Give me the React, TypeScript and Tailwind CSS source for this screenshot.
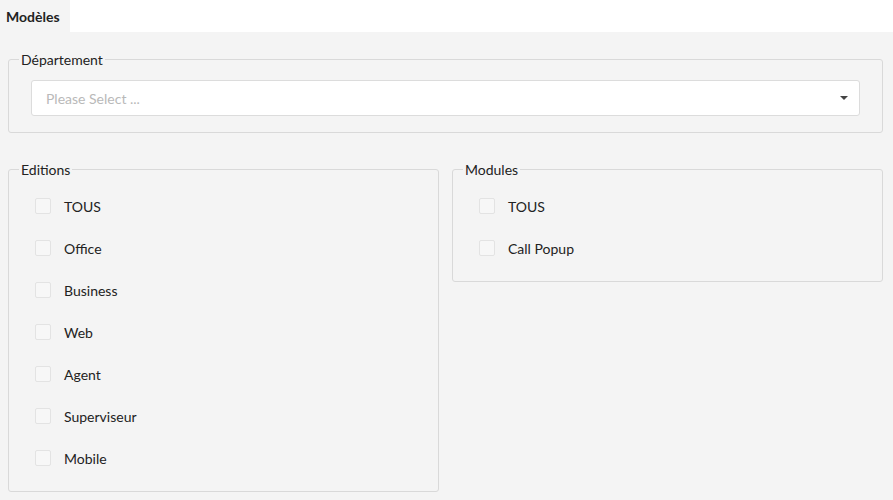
import React from 'react';

const editions = ['TOUS', 'Office', 'Business', 'Web', 'Agent', 'Superviseur', 'Mobile'];
const modules = ['TOUS', 'Call Popup'];

function CheckRow({ label }: { label: string }) {
  return (
    <label className="flex h-[42px] items-center gap-[13px]">
      <span className="size-4 rounded-[2px] border border-[#e3e3e3] bg-[#f7f7f7]" />
      <span className="text-[14px] text-[#222]">{label}</span>
    </label>
  );
}

function Group({ title, items, className }: { title: string; items: string[]; className?: string }) {
  return (
    <fieldset className={`rounded-[3px] border border-[#d9d9d9] px-[26px] pt-[5px] pb-[12px] ${className ?? ''}`}>
      <legend className="-ml-[16px] px-[2px] text-[14px] text-[#222]">{title}</legend>
      {items.map((item) => (
        <CheckRow key={item} label={item} />
      ))}
    </fieldset>
  );
}

export default function App() {
  return (
    <div className="min-h-[500px] bg-[#f4f4f4] font-['Lato',sans-serif]">
      <div className="flex h-8 bg-white">
        <div className="flex w-[70px] items-center bg-[#f4f4f4] pl-[6px] text-[14px] font-bold text-[#222]">
          Modèles
        </div>
      </div>

      <div className="pt-[17px] pr-[10px] pl-[8px]">
        <fieldset className="rounded-[3px] border border-[#d9d9d9] px-[22px] pt-[10px] pb-[16px]">
          <legend className="-ml-[12px] px-[2px] text-[14px] text-[#222]">Département</legend>
          <div className="flex h-9 items-center justify-between rounded-[3px] border border-[#dcdcdc] bg-white pr-[11px] pl-[14px]">
            <span className="text-[14px] text-[#b9b9b9]">Please Select ...</span>
            <svg width="8" height="4" viewBox="0 0 8 4">
              <path d="M0 0h8L4 4z" fill="#444" />
            </svg>
          </div>
        </fieldset>

        <div className="mt-[26px] flex items-start gap-[13px]">
          <Group title="Editions" items={editions} className="flex-1" />
          <Group title="Modules" items={modules} className="flex-1" />
        </div>
      </div>
    </div>
  );
}
